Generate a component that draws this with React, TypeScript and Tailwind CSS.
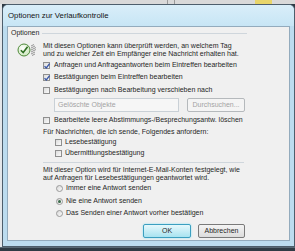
import type { ReactNode } from 'react';

function Check({ checked }: { checked?: boolean }) {
    return (
        <span className="relative inline-flex h-[7px] w-[7px] shrink-0 items-center justify-center border border-[#8f8f8f] bg-[linear-gradient(135deg,#dcdcdc,#fafafa)]">
            {checked && (
                <svg viewBox="0 0 8 8" className="absolute left-[-1px] top-[-1px] h-[8px] w-[8px]">
                    <path d="M1.5 4.2 L3.3 6 L6.6 1.6" fill="none" stroke="#3d5aa8" strokeWidth="1.4" />
                </svg>
            )}
        </span>
    );
}

function Radio({ checked }: { checked?: boolean }) {
    return (
        <span className="inline-flex h-[7px] w-[7px] shrink-0 items-center justify-center rounded-full border border-[#9a9a9a] bg-[linear-gradient(135deg,#d8d8d8,#fbfbfb)]">
            {checked && <span className="h-[3px] w-[3px] rounded-full bg-[#3a6a4a]" />}
        </span>
    );
}

function CheckRow({ checked, children, className }: { checked?: boolean; children: ReactNode; className: string }) {
    return (
        <div className={`flex items-center ${className}`}>
            <Check checked={checked} />
            <span className="ml-[4px] whitespace-nowrap">{children}</span>
        </div>
    );
}

function RadioRow({ checked, children, className }: { checked?: boolean; children: ReactNode; className: string }) {
    return (
        <div className={`flex items-center pl-[45px] ${className}`}>
            <Radio checked={checked} />
            <span className="ml-[3px] whitespace-nowrap">{children}</span>
        </div>
    );
}

function TrackingIcon() {
    return (
        <svg viewBox="0 0 25 14" className="h-[14px] w-[25px] shrink-0">
            <defs>
                <radialGradient id="g" cx="0.4" cy="0.35" r="0.7">
                    <stop offset="0" stopColor="#ffffff" />
                    <stop offset="1" stopColor="#c9e6b8" />
                </radialGradient>
            </defs>
            <circle cx="7" cy="7" r="6" fill="url(#g)" stroke="#4f8a3a" strokeWidth="1" />
            <path d="M3.8 7.2 L6.2 9.6 L10.6 3.8" fill="none" stroke="#2f6e22" strokeWidth="1.6" />
            <path d="M14 3 l3 -1.5 M14 5 l4 -2 M14 7 l5 -2.5 M14 9 l5 -2.5 M14 11 l4 -2 M15 12.5 l3 -1.5" stroke="#8a8a8a" strokeWidth="0.9" />
        </svg>
    );
}

export default function App() {
    return (
        <div className="flex h-[251px] w-[295px] flex-col overflow-hidden bg-[#2f3b45] font-['Liberation_Sans',sans-serif] text-[7px] text-[#262626]">
            {/* toolbar of the window behind */}
            <div className="flex h-[4px] shrink-0 items-stretch bg-[#d9d9d9]">
                <div className="w-[167px]" />
                <div className="w-px bg-[#9a9a9a]" />
                <div className="w-[6px]" />
                <div className="w-px bg-[#9a9a9a]" />
                <div className="w-[80px]" />
                <div className="w-[17px] bg-[#e8d56a]" />
            </div>

            <div className="flex shrink-0">
                <div className="w-[2px] bg-[#e4e7ea]" />
                <div className="flex h-[243px] w-[293px] flex-col rounded-t-[6px] border border-[#4d5e6c] bg-[#bcdcef]">
                    {/* title bar */}
                    <div className="flex h-[21px] shrink-0 items-center rounded-t-[5px] bg-[linear-gradient(#d9eef9,#c7e5f5)] pl-[5px] text-[7.8px] text-[#141414]">
                        Optionen zur Verlaufkontrolle
                    </div>

                    {/* client area */}
                    <div className="ml-[4px] mr-[4px] flex h-[215px] flex-col border border-[#93abbd] bg-[#f0f0f0] pl-[3px]">
                        <div className="mt-[2px] flex h-[8px] w-[236px] items-center">
                            <span>Optionen</span>
                            <span className="ml-[3px] h-0 flex-1 border-t border-[#cfd6dc]" />
                        </div>

                        <div className="mt-[5px] flex h-[15px] items-center">
                            <div className="ml-[6px] w-[26px]">
                                <TrackingIcon />
                            </div>
                            <div className="leading-[7.5px] whitespace-nowrap">
                                <div>Mit diesen Optionen kann überprüft werden, an welchem Tag</div>
                                <div>und zu welcher Zeit ein Empfänger eine Nachricht erhalten hat.</div>
                            </div>
                        </div>

                        <div className="pl-[32px]">
                            <CheckRow checked className="mt-[3px] h-[11px]">
                                Anfragen und Anfrageantworten beim Eintreffen bearbeiten
                            </CheckRow>
                            <CheckRow checked className="mt-[1px] h-[11px]">
                                Bestätigungen beim Eintreffen bearbeiten
                            </CheckRow>
                            <CheckRow className="mt-[1px] h-[12px]">
                                Bestätigungen nach Bearbeitung verschieben nach
                            </CheckRow>
                        </div>

                        <div className="mt-[2px] flex h-[14px] pl-[43px]">
                            <div className="flex w-[125px] items-center border border-[#c9d0d6] bg-[#f6f6f6] pl-[3px] text-[#a3a3a3]">
                                Gelöschte Objekte
                            </div>
                            <div className="ml-[8px] flex w-[58px] items-center justify-center rounded-[2px] border border-[#b5b9bc] bg-[#f4f4f4] text-[#a3a3a3]">
                                Durchsuchen...
                            </div>
                        </div>

                        <div className="pl-[32px]">
                            <CheckRow className="mt-[2px] h-[12px]">
                                Bearbeitete leere Abstimmungs-/Besprechungsantw. löschen
                            </CheckRow>
                            <div className="flex h-[12px] items-center whitespace-nowrap">
                                Für Nachrichten, die ich sende, Folgendes anfordern:
                            </div>
                        </div>

                        <div className="pl-[44px]">
                            <div className="flex h-[9px] items-center">
                                <Check />
                                <span className="ml-[3px]">Lesebestätigung</span>
                            </div>
                            <div className="mt-[1px] flex h-[10px] items-center">
                                <Check />
                                <span className="ml-[3px]">Übermittlungsbestätigung</span>
                            </div>
                        </div>

                        <div className="ml-[32px] mt-[4px] h-0 w-[201px] border-t border-[#cfd6dc]" />

                        <div className="mt-[3px] pl-[32px] leading-[8px] whitespace-nowrap">
                            <div>Mit dieser Option wird für Internet-E-Mail-Konten festgelegt, wie</div>
                            <div>auf Anfragen für Lesebestätigungen geantwortet wird.</div>
                        </div>

                        <RadioRow className="mt-[1px] h-[10px]">Immer eine Antwort senden</RadioRow>
                        <RadioRow checked className="mt-[3px] h-[11px]">Nie eine Antwort senden</RadioRow>
                        <RadioRow className="mt-[1px] h-[10px]">Das Senden einer Antwort vorher bestätigen</RadioRow>

                        <div className="mt-[6px] flex h-[14px] w-[234px] justify-end gap-[7px]">
                            <button className="flex w-[48px] items-center justify-center rounded-[2px] border border-[#3c9fc0] bg-[linear-gradient(#e6f8fc,#a8e3f0)] shadow-[0_0_2px_#7fe0f5]">
                                OK
                            </button>
                            <button className="flex w-[47px] items-center justify-center rounded-[2px] border border-[#7a7a7a] bg-[linear-gradient(#f4f4f4,#dcdcdc)]">
                                Abbrechen
                            </button>
                        </div>
                    </div>
                </div>
            </div>

            <div className="flex-1 border-t border-[#5a6a76] bg-[#2f3b45]" />
        </div>
    );
}
